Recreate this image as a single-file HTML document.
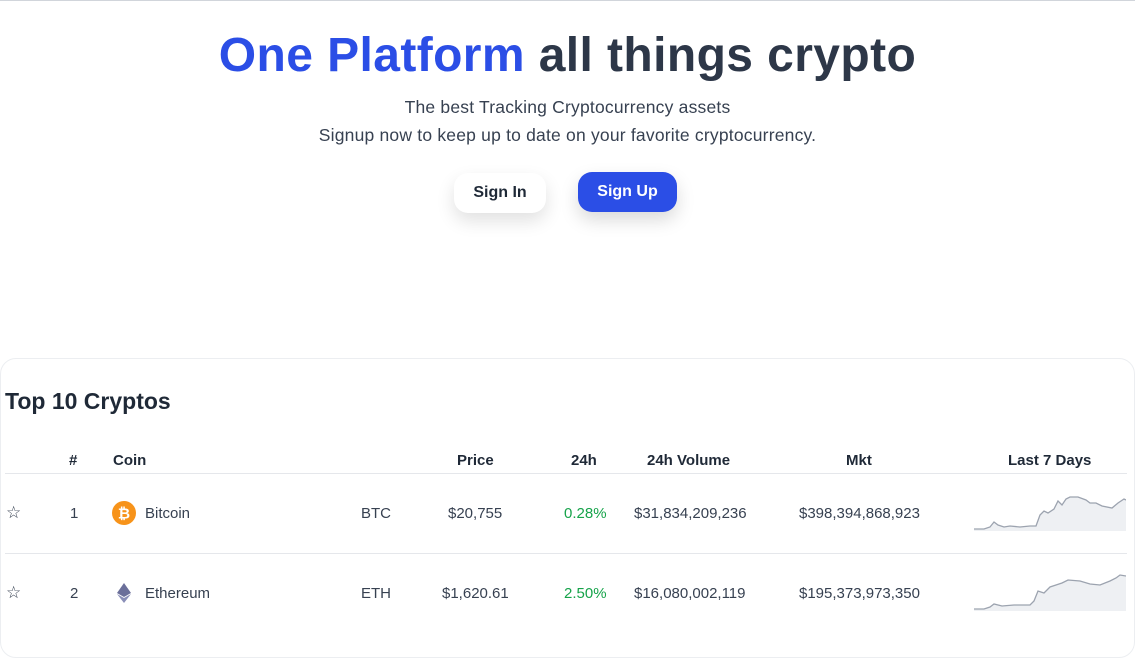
<!DOCTYPE html>
<html><head><style>
*{margin:0;padding:0;box-sizing:border-box}
body{width:1135px;height:619px;overflow:hidden;background:#fff;font-family:"Liberation Sans","DejaVu Sans",sans-serif;color:#1f2937;position:relative;border-top:1px solid #d1d5db}
.a{position:absolute}
h1{position:absolute;top:27px;left:0;width:1135px;text-align:center;font-size:48px;font-weight:700;color:#2d3748;letter-spacing:0.4px}
h1 span{color:#2b4ee6}
.sub{left:0;width:1135px;text-align:center;font-size:17.5px;color:#374151;letter-spacing:0.2px}
.btn{height:40px;border-radius:14px;font-weight:700;font-size:16px;display:flex;align-items:center;justify-content:center}
.card{left:0;top:357px;width:1135px;height:300px;border:1px solid #eceef1;border-radius:16px}
.th{top:451px;font-weight:700;font-size:15px;color:#1f2937}
.td{font-size:15px;color:#374151}
.hr{left:5px;width:1122px;height:1px;background:#e5e7eb}
</style></head><body>
<h1><span>One Platform</span> all things crypto</h1>
<div class="a sub" style="top:96px">The best Tracking Cryptocurrency assets</div>
<div class="a sub" style="top:124px">Signup now to keep up to date on your favorite cryptocurrency.</div>
<div class="a btn" style="left:454px;top:172px;width:92px;background:#fff;box-shadow:0 8px 18px rgba(0,0,0,.12);color:#1f2937">Sign In</div>
<div class="a btn" style="left:578px;top:171px;width:99px;background:#2b4ee6;color:#fff;box-shadow:0 8px 18px rgba(0,0,0,.15)">Sign Up</div>
<div class="a card"></div>
<div class="a" style="left:5px;top:387px;font-size:23px;font-weight:700;color:#1f2937">Top 10 Cryptos</div>
<div class="a th" style="left:69px">#</div>
<div class="a th" style="left:113px">Coin</div>
<div class="a th" style="left:457px">Price</div>
<div class="a th" style="left:571px">24h</div>
<div class="a th" style="left:647px">24h Volume</div>
<div class="a th" style="left:846px">Mkt</div>
<div class="a th" style="left:1008px">Last 7 Days</div>
<div class="a hr" style="top:472px"></div>
<div class="a hr" style="top:552px"></div>

<div class="a td" style="left:6px;top:502px;font-size:17px">☆</div>
<div class="a td" style="left:70px;top:504px">1</div>
<svg class="a" style="left:112px;top:500px" width="24" height="24" viewBox="0 0 24 24"><circle cx="12" cy="12" r="12" fill="#f7931a"/><text x="12" y="17.5" text-anchor="middle" font-size="15" font-weight="700" fill="#fff" font-family="Liberation Sans">₿</text></svg>
<div class="a td" style="left:145px;top:504px">Bitcoin</div>
<div class="a td" style="left:361px;top:504px">BTC</div>
<div class="a td" style="left:448px;top:504px">$20,755</div>
<div class="a td" style="left:564px;top:504px;color:#16a34a">0.28%</div>
<div class="a td" style="left:634px;top:504px">$31,834,209,236</div>
<div class="a td" style="left:799px;top:504px">$398,394,868,923</div>
<svg class="a" style="left:974px;top:490px" width="152" height="42"><path d="M0 38 L10 38 L16 36 L20 31 L24 34 L30 36 L36 35 L46 36 L56 35 L62 35 L66 24 L70 20 L74 22 L80 18 L84 10 L88 14 L92 8 L96 6 L104 6 L112 9 L116 12 L122 12 L128 15 L138 17 L144 12 L150 8 L152 9 L152 40 L0 40Z" fill="#eef0f3"/><path d="M0 38 L10 38 L16 36 L20 31 L24 34 L30 36 L36 35 L46 36 L56 35 L62 35 L66 24 L70 20 L74 22 L80 18 L84 10 L88 14 L92 8 L96 6 L104 6 L112 9 L116 12 L122 12 L128 15 L138 17 L144 12 L150 8 L152 9" fill="none" stroke="#9ca3af" stroke-width="1.3"/></svg>

<div class="a td" style="left:6px;top:582px;font-size:17px">☆</div>
<div class="a td" style="left:70px;top:584px">2</div>
<svg class="a" style="left:117px;top:582px" width="14" height="20" viewBox="0 0 14 20"><path d="M7 0 L14 10 L7 14 L0 10Z" fill="#6b6f9a"/><path d="M7 15 L14 11 L7 20 L0 11Z" fill="#8a8fb8"/></svg>
<div class="a td" style="left:145px;top:584px">Ethereum</div>
<div class="a td" style="left:361px;top:584px">ETH</div>
<div class="a td" style="left:442px;top:584px">$1,620.61</div>
<div class="a td" style="left:564px;top:584px;color:#16a34a">2.50%</div>
<div class="a td" style="left:634px;top:584px">$16,080,002,119</div>
<div class="a td" style="left:799px;top:584px">$195,373,973,350</div>
<svg class="a" style="left:974px;top:570px" width="152" height="42"><path d="M0 38 L10 38 L16 36 L20 33 L28 35 L40 34 L56 34 L60 30 L64 20 L70 22 L76 16 L82 14 L88 12 L94 9 L106 10 L116 13 L126 14 L136 10 L142 7 L146 4 L152 5 L152 40 L0 40Z" fill="#eef0f3"/><path d="M0 38 L10 38 L16 36 L20 33 L28 35 L40 34 L56 34 L60 30 L64 20 L70 22 L76 16 L82 14 L88 12 L94 9 L106 10 L116 13 L126 14 L136 10 L142 7 L146 4 L152 5" fill="none" stroke="#9ca3af" stroke-width="1.3"/></svg>
</body></html>
